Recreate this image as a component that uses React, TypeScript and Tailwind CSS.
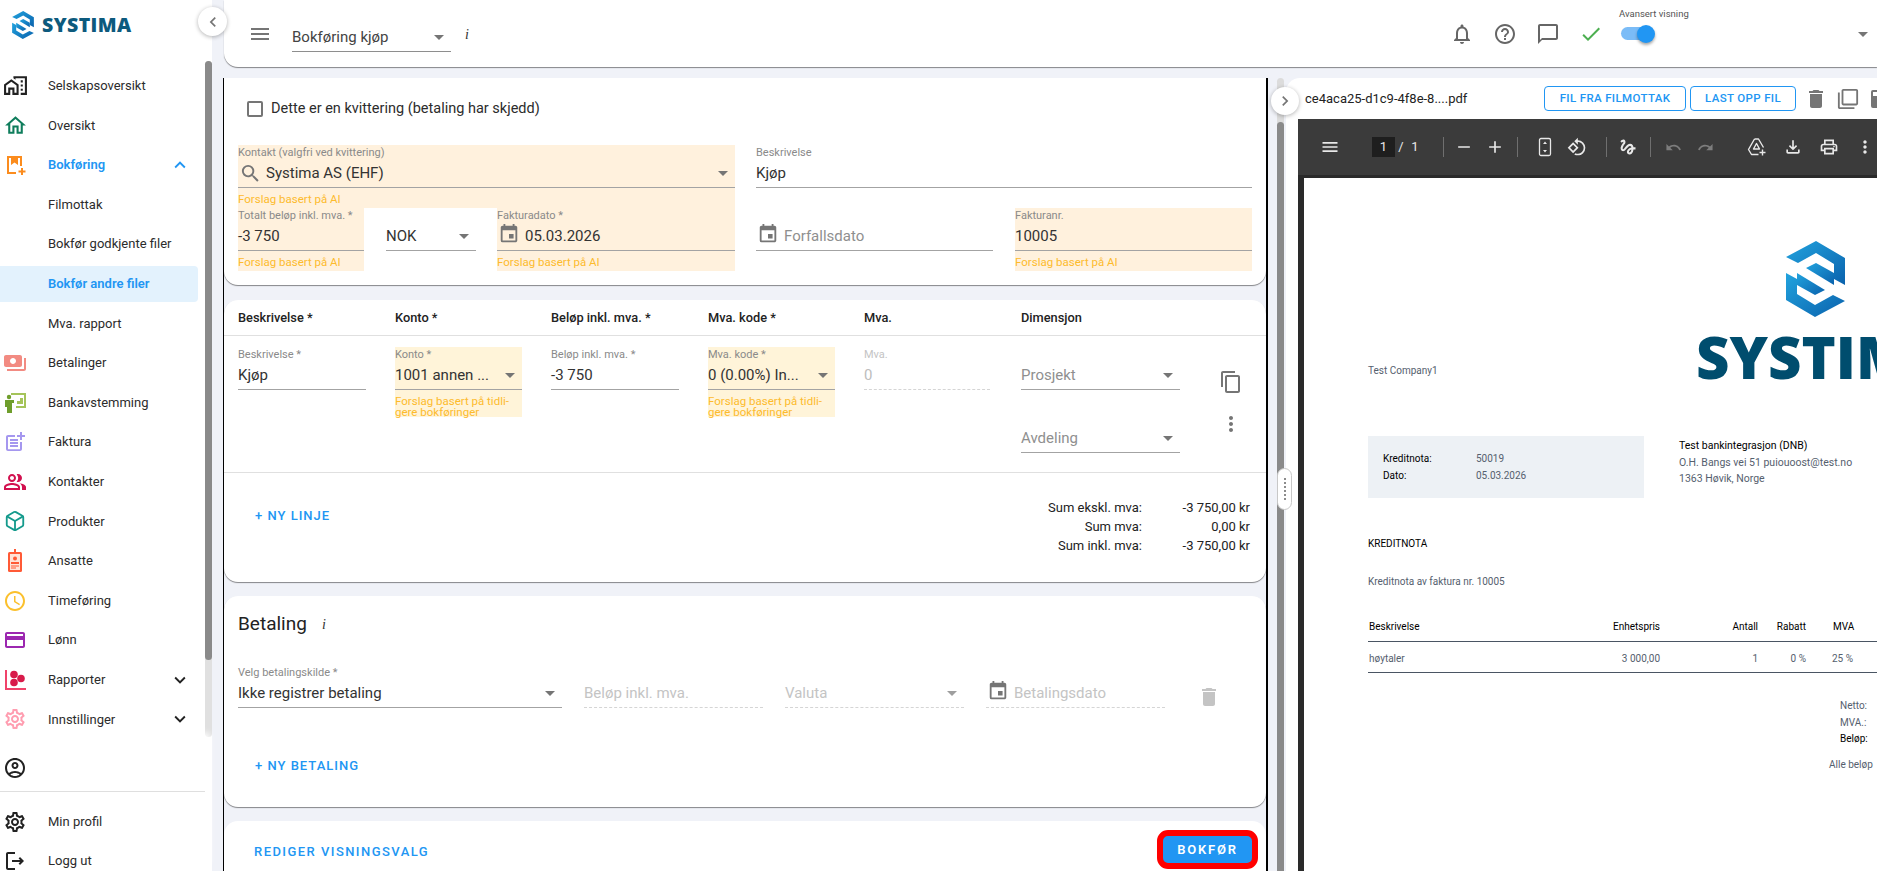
import type { ReactNode } from "react";
import { Box } from "lucide-react";
import {
  MdAdd,
  MdArrowDropDown,
  MdCheck,
  MdChevronLeft,
  MdChevronRight,
  MdContentCopy,
  MdDelete,
  MdEvent,
  MdExpandLess,
  MdExpandMore,
  MdFilterNone,
  MdHelpOutline,
  MdMenu,
  MdMoreVert,
  MdOutlineAccessTime,
  MdOutlineAccountCircle,
  MdOutlineChatBubbleOutline,
  MdOutlineFileDownload,
  MdOutlineGesture,
  MdOutlineHome,
  MdOutlineHomeWork,
  MdOutlineLogout,
  MdOutlineNotifications,
  MdOutlinePayment,
  MdOutlinePeopleAlt,
  MdOutlinePostAdd,
  MdOutlinePrint,
  MdOutlineRotate90DegreesCcw,
  MdOutlineSettings,
  MdPayments,
  MdRedo,
  MdRemove,
  MdSave,
  MdSearch,
  MdUndo,
} from "react-icons/md";

const AI_HINT = "Forslag basert på AI";

function LogoMark({ className }: { className: string }) {
  return (
    <svg viewBox="0 0 59 76" className={className}>
      <defs>
        <linearGradient id="logoFill" x1="0" y1="0" x2="1" y2="1">
          <stop offset="0" stopColor="#22a3de" />
          <stop offset="1" stopColor="#0a62ad" />
        </linearGradient>
      </defs>
      <path d="M0 16 L30 0 L59 17 V44 L48 38 V23 L30 12 L12 22 Z" fill="url(#logoFill)" />
      <path d="M20 27 L30 22 L48 32 V44 Z" fill="url(#logoFill)" />
      <path d="M59 60 L29 76 L0 59 V32 L11 38 V53 L29 64 L47 54 Z" fill="url(#logoFill)" />
      <path d="M39 49 L29 54 L11 44 V32 Z" fill="url(#logoFill)" />
    </svg>
  );
}

function BookingIcon() {
  return (
    <svg viewBox="0 0 24 24" className="w-[24px] h-[24px]" fill="none">
      <path d="M18 13V4H5v16h8" stroke="#fb8c1e" strokeWidth="2" />
      <path d="M8 4h7v8l-3.500-2.500L8 12z" fill="#fb8c1e" />
      <path d="M19 15v7M15.500 18.500h7" stroke="#fb8c1e" strokeWidth="2" />
    </svg>
  );
}

function BankIcon() {
  return (
    <svg viewBox="0 0 24 24" className="w-[24px] h-[24px]" fill="none">
      <path d="M8 3h14v13H13" stroke="#a5c45a" strokeWidth="2" />
      <path d="M14 13h6V7h-3v3h-3z" fill="#a5c45a" />
      <circle cx="6" cy="6" r="2.200" fill="#6f9e2c" />
      <path d="M2 9h9v3H9v10H4v-6H2z" fill="#6f9e2c" />
    </svg>
  );
}

function BadgeIcon() {
  return (
    <svg viewBox="0 0 24 24" className="w-[24px] h-[24px]">
      <path d="M11 0h2v4h-2z" fill="#ff5a36" />
      <rect x="5" y="3" width="14" height="20" rx="1.500" fill="#ff5a36" />
      <rect x="7" y="5" width="10" height="16" fill="#ffe3d8" />
      <circle cx="12" cy="9.500" r="2" fill="#ff5a36" />
      <path d="M8 13h8v2H8zM8 16.500h8v1H8zM8 18.500h5v1H8z" fill="#ff5a36" />
    </svg>
  );
}

function ReportIcon() {
  return (
    <svg viewBox="0 0 24 24" className="w-[24px] h-[24px]" fill="none">
      <path d="M3 2v19h20" stroke="#f0436a" strokeWidth="2" />
      <circle cx="11" cy="6.500" r="3.800" fill="#d81b4a" />
      <circle cx="18" cy="10.500" r="3.800" fill="#d81b4a" />
      <circle cx="11" cy="14.500" r="3.800" fill="#d81b4a" />
    </svg>
  );
}

function FitPageIcon() {
  return (
    <svg viewBox="0 0 20 20" className="w-[20px] h-[20px]" fill="none" stroke="#e8e8e8" strokeWidth="1.300">
      <rect x="4.500" y="1.500" width="11" height="17" rx="1.500" />
      <path d="M10 4.500 8 7h4zM10 15.500 8 13h4z" fill="#e8e8e8" stroke="none" />
    </svg>
  );
}

function DriveAddIcon() {
  return (
    <svg viewBox="0 0 20 20" className="w-[20px] h-[20px]" fill="none" stroke="#e8e8e8" strokeWidth="1.400" strokeLinejoin="round">
      <path d="M7.500 2h4l5 8.500M7.500 2 1.500 12.500l3 5h7" />
      <path d="M9.500 6.500 12.500 12h-6z" />
      <path d="M15.500 12.500v6M12.500 15.500h6" />
    </svg>
  );
}

const navItems: { label: string; icon?: ReactNode; open?: boolean; closed?: boolean; sub?: boolean; active?: boolean; blue?: boolean }[] = [
  { label: "Selskapsoversikt", icon: <MdOutlineHomeWork size={25} color="#222" /> },
  { label: "Oversikt", icon: <MdOutlineHome size={25} color="#0f7d5c" /> },
  { label: "Bokføring", icon: <BookingIcon />, open: true, blue: true },
  { label: "Filmottak", sub: true },
  { label: "Bokfør godkjente filer", sub: true },
  { label: "Bokfør andre filer", sub: true, active: true, blue: true },
  { label: "Mva. rapport", sub: true },
  { label: "Betalinger", icon: <MdPayments size={24} color="#f28b82" /> },
  { label: "Bankavstemming", icon: <BankIcon /> },
  { label: "Faktura", icon: <MdOutlinePostAdd size={24} color="#a597ef" /> },
  { label: "Kontakter", icon: <MdOutlinePeopleAlt size={24} color="#d2114f" /> },
  { label: "Produkter", icon: <Box size={22} color="#149a8c" strokeWidth={2} /> },
  { label: "Ansatte", icon: <BadgeIcon /> },
  { label: "Timeføring", icon: <MdOutlineAccessTime size={24} color="#fbc02d" /> },
  { label: "Lønn", icon: <MdOutlinePayment size={24} color="#9c27b0" /> },
  { label: "Rapporter", icon: <ReportIcon />, closed: true },
  { label: "Innstillinger", icon: <MdOutlineSettings size={24} color="#ff9db0" />, closed: true },
];

function NavRow({ label, icon, open, closed, active, blue }: (typeof navItems)[number]) {
  return (
    <div className="h-[39.6px] flex items-center">
      <div className={`w-[198px] h-[36px] flex items-center rounded-r-[4px] ${active ? "bg-[#e3f2fd]" : ""}`}>
        <span className="w-[30px] flex justify-center shrink-0">{icon}</span>
        <span className={`ml-[18px] text-[13px] whitespace-nowrap ${blue ? "text-[#2196f3] font-semibold" : "text-[#2c2c2c]"}`}>{label}</span>
        {open && <MdExpandLess size={22} color="#2196f3" className="ml-auto mr-[7px]" />}
        {closed && <MdExpandMore size={22} color="#222" className="ml-auto mr-[7px]" />}
      </div>
    </div>
  );
}

function Sidebar() {
  return (
    <aside className="w-[212px] h-full shrink-0 bg-white flex flex-col">
      <div className="h-[61px] shrink-0 pl-[12px] pt-[11px] flex items-start gap-[8px]">
        <LogoMark className="w-[22px] h-[28px]" />
        <span className="text-[19.500px] leading-[28px] font-extrabold tracking-[0.4px] text-[#0d5a7d] font-['Open_Sans',sans-serif]">SYSTIMA</span>
      </div>
      <div className="flex-1 min-h-0 flex">
        <nav className="w-[205px] pt-[5px] overflow-hidden">
          {navItems.map((item) => (
            <NavRow key={item.label} {...item} />
          ))}
        </nav>
        <div className="w-[7px] bg-[#e0e0e0] rounded-full">
          <div className="h-[599px] bg-[#8a8a8a] rounded-full" />
        </div>
      </div>
      <div className="h-[134px] shrink-0 bg-white shadow-[0_-6px_6px_-2px_rgba(255,255,255,0.9)]">
        <div className="h-[54px] pt-[8px] flex items-center pl-[3px]">
          <MdOutlineAccountCircle size={24} color="#222" />
        </div>
        <div className="w-[205px] border-t border-[#dfdfdf]" />
        <div className="pt-[10px]">
          <div className="h-[39px] flex items-center">
            <span className="w-[30px] flex justify-center"><MdOutlineSettings size={24} color="#222" /></span>
            <span className="ml-[18px] text-[13px] text-[#2c2c2c]">Min profil</span>
          </div>
          <div className="h-[39px] flex items-center">
            <span className="w-[30px] flex justify-center"><MdOutlineLogout size={24} color="#222" /></span>
            <span className="ml-[18px] text-[13px] text-[#2c2c2c]">Logg ut</span>
          </div>
        </div>
      </div>
    </aside>
  );
}

function TopBar() {
  return (
    <header className="ml-[12px] h-[67px] shrink-0 bg-white rounded-bl-[14px] shadow-[0_1px_1px_rgba(0,0,0,0.45)] flex items-center">
      <MdMenu size={24} color="#757575" className="ml-[24px]" />
      <div className="ml-[20px] w-[159px] h-[29px] mt-[8px] border-b border-[#8e8e8e] flex items-center justify-between">
        <span className="text-[15px] text-[#444]">Bokføring kjøp</span>
        <MdArrowDropDown size={24} color="#757575" />
      </div>
      <span className="ml-[14px] mt-[1px] text-[14px] italic font-['Liberation_Serif',serif] text-[#333]">i</span>
      <div className="ml-auto h-full flex items-center">
        <div className="flex items-center gap-[19px] mr-[16px]">
          <MdOutlineNotifications size={24} color="#666" />
          <MdHelpOutline size={24} color="#666" />
          <MdOutlineChatBubbleOutline size={24} color="#666" />
          <MdCheck size={24} color="#4caf50" />
        </div>
        <div className="w-[68px] h-full pt-[8px]">
          <div className="h-[12px] text-[9.500px] leading-[12px] whitespace-nowrap text-[#555]">Avansert visning</div>
          <div className="relative mt-[7px] ml-[2px] w-[33px] h-[13px] rounded-full bg-[#7bbcf7]">
            <span className="absolute right-[-1px] top-[-2.500px] w-[18px] h-[18px] rounded-full bg-[#2196f3] shadow-[0_2px_3px_rgba(0,0,0,0.35)]" />
          </div>
        </div>
        <MdArrowDropDown size={24} color="#757575" className="ml-[164px] mr-[2px]" />
      </div>
    </header>
  );
}

type FieldProps = {
  label?: string;
  value?: string;
  placeholder?: string;
  select?: boolean;
  hint?: string;
  tint?: string;
  icon?: ReactNode;
  disabled?: boolean;
  className?: string;
};

function Field({ label, value, placeholder, select, hint, tint, icon, disabled, className }: FieldProps) {
  return (
    <div className={`${tint ?? ""} ${className ?? ""}`}>
      <div className={`h-[14px] text-[11px] leading-[16px] whitespace-nowrap ${disabled ? "text-[#c4c4c4]" : "text-[#8a8a8a]"}`}>{label}</div>
      <div className={`h-[29px] flex items-center ${disabled ? "border-b border-dashed border-[#d5d5d5]" : "border-b border-[#a3a3a3]"}`}>
        {icon}
        <span className={`flex-1 min-w-0 whitespace-nowrap text-[15px] ${value ? (disabled ? "text-[#bdbdbd]" : "text-[#333]") : disabled ? "text-[#c4c4c4]" : "text-[#8f8f8f]"}`}>
          {value ?? placeholder}
        </span>
        {select && <MdArrowDropDown size={24} color={disabled ? "#9e9e9e" : "#757575"} className="shrink-0" />}
      </div>
      {hint && <div className="pt-[6px] text-[11.500px] leading-[11px] text-[#fdbb2d]">{hint}</div>}
    </div>
  );
}

const cardShadow = "shadow-[0_1px_1px_rgba(0,0,0,0.45)]";
const calendar = <MdEvent size={22} color="#757575" className="mr-[5px] ml-[1px] mb-[4px] shrink-0" />;

function ReceiptCard() {
  return (
    <section className={`bg-white rounded-b-[14px] ${cardShadow} h-[207px] shrink-0 pl-[14px] pr-[15px]`}>
      <label className="ml-[9px] pt-[23px] flex items-center gap-[8px]">
        <span className="w-[16px] h-[16px] rounded-[2px] border-2 border-[#757575]" />
        <span className="text-[14.500px] leading-[16px] text-[#2c2c2c]">Dette er en kvittering (betaling har skjedd)</span>
      </label>
      <div className="mt-[28px] grid grid-cols-[497px_496px] gap-x-[21px]">
        <Field
          label="Kontakt (valgfri ved kvittering)"
          value="Systima AS (EHF)"
          select
          hint={AI_HINT}
          tint="bg-[#fff1dd] h-[63px]"
          icon={<MdSearch size={23} color="#757575" className="mr-[4px] ml-[1px] shrink-0" />}
        />
        <Field label="Beskrivelse" value="Kjøp" />
      </div>
      <div className="grid grid-cols-[126px_91px_238px_237px_238px] gap-x-[21px]">
        <Field label="Totalt beløp inkl. mva. *" value="-3 750" hint={AI_HINT} tint="bg-[#fff1dd] h-[63px]" />
        <Field value="NOK" select className="ml-[1px]" />
        <Field label="Fakturadato *" value="05.03.2026" hint={AI_HINT} tint="bg-[#fff1dd] h-[63px]" icon={calendar} />
        <Field placeholder="Forfallsdato" icon={calendar} />
        <Field label="Fakturanr." value="10005" hint={AI_HINT} tint="bg-[#fff1dd] h-[63px]" className="ml-[1px]" />
      </div>
    </section>
  );
}

const lineGrid = "grid grid-cols-[128px_127px_128px_127px_128px_159px_44px] gap-x-[29px] pl-[14px]";
const TIP = "Forslag basert på tidli-gere bokføringer";

function LinesCard() {
  return (
    <section className={`mt-[15px] bg-white rounded-[14px] ${cardShadow} h-[282px] shrink-0`}>
      <div className={`${lineGrid} h-[36px] items-center border-b border-[#e0e0e0] text-[12.800px] font-medium text-[#222]`}>
        <span>Beskrivelse *</span>
        <span>Konto *</span>
        <span>Beløp inkl. mva. *</span>
        <span>Mva. kode *</span>
        <span>Mva.</span>
        <span>Dimensjon</span>
        <span />
      </div>
      <div className={`${lineGrid} h-[137px] pt-[11px] border-b border-[#e0e0e0]`}>
        <Field label="Beskrivelse *" value="Kjøp" />
        <Field label="Konto *" value="1001 annen ..." select hint={TIP} tint="bg-[#fff4d9] h-[70px]" />
        <Field label="Beløp inkl. mva. *" value="-3 750" />
        <Field label="Mva. kode *" value="0 (0.00%) In..." select hint={TIP} tint="bg-[#fff4d9] h-[70px]" />
        <Field label="Mva." value="0" disabled className="w-[126px]" />
        <div>
          <Field placeholder="Prosjekt" select />
          <Field placeholder="Avdeling" select className="mt-[20px]" />
        </div>
        <div className="flex flex-col items-center pt-[23px] text-[#757575]">
          <MdContentCopy size={24} />
          <MdMoreVert size={24} className="mt-[18px]" />
        </div>
      </div>
      <div className="flex justify-between pl-[31px] pr-[16px] pt-[25px]">
        <span className="h-[36px] flex items-center text-[13px] font-medium tracking-[1px] text-[#2196f3]">+ NY LINJE</span>
        <div className="grid grid-cols-[auto_108px] text-[13px] leading-[19px] text-right text-[#222]">
          <span>Sum ekskl. mva:</span>
          <span>-3 750,00 kr</span>
          <span>Sum mva:</span>
          <span>0,00 kr</span>
          <span>Sum inkl. mva:</span>
          <span>-3 750,00 kr</span>
        </div>
      </div>
    </section>
  );
}

function PaymentCard() {
  return (
    <section className={`mt-[14px] bg-white rounded-[14px] ${cardShadow} h-[211px] shrink-0 pl-[14px]`}>
      <div className="pt-[14px] h-[42px] flex items-center gap-[15px]">
        <span className="text-[19px] text-[#222]">Betaling</span>
        <span className="text-[14px] italic font-['Liberation_Serif',serif] text-[#333]">i</span>
      </div>
      <div className="mt-[27px] grid grid-cols-[324px_179px_179px_179px_24px] gap-x-[22px]">
        <Field label="Velg betalingskilde *" value="Ikke registrer betaling" select />
        <Field placeholder="Beløp inkl. mva." disabled />
        <Field placeholder="Valuta" select disabled />
        <Field placeholder="Betalingsdato" disabled icon={calendar} />
        <MdDelete size={24} color="#c4c4c4" className="mt-[20px] ml-[10px]" />
      </div>
      <div className="mt-[39px] ml-[17px] h-[36px] flex items-center text-[13px] font-medium tracking-[1px] text-[#2196f3]">+ NY BETALING</div>
    </section>
  );
}

function ActionCard() {
  return (
    <section className="mt-[14px] flex-1 bg-white rounded-t-[14px] flex items-start justify-between pl-[30px] pr-[8px] pt-[9px]">
      <span className="h-[44px] flex items-center text-[13px] font-medium tracking-[1.450px] text-[#2196f3]">REDIGER VISNINGSVALG</span>
      <button className="w-[101px] h-[39px] rounded-[11px] border-[6px] border-[#ff0000] bg-[#2196f3] text-[13px] font-semibold tracking-[1.800px] text-white">BOKFØR</button>
    </section>
  );
}

function ToolbarSep({ className }: { className: string }) {
  return <span className={`w-px h-[20px] bg-[#6f6f6f] shrink-0 ${className}`} />;
}

function PdfToolbar() {
  return (
    <div className="h-[56px] shrink-0 bg-[#3b3b3b] flex items-center text-[#e8e8e8]">
      <MdMenu size={20} className="ml-[22px] shrink-0" />
      <span className="ml-[32px] w-[23px] h-[20px] bg-[#1e1e1e] text-[13px] leading-[20px] text-center shrink-0">1</span>
      <span className="w-[12px] text-[13px] text-center shrink-0">/</span>
      <span className="ml-[2px] w-[12px] text-[13px] text-center shrink-0">1</span>
      <ToolbarSep className="ml-[22px]" />
      <MdRemove size={20} className="ml-[10px] shrink-0" />
      <MdAdd size={20} className="ml-[11px] shrink-0" />
      <ToolbarSep className="ml-[12px]" />
      <span className="ml-[17px] shrink-0"><FitPageIcon /></span>
      <MdOutlineRotate90DegreesCcw size={20} className="ml-[12px] shrink-0" />
      <ToolbarSep className="ml-[19px]" />
      <MdOutlineGesture size={20} className="ml-[11px] shrink-0" />
      <ToolbarSep className="ml-[12px]" />
      <span className="ml-[12px] w-[20px] flex justify-center shrink-0"><MdUndo size={17} color="#7d7d7d" /></span>
      <span className="ml-[12px] w-[20px] flex justify-center shrink-0"><MdRedo size={17} color="#7d7d7d" /></span>
      <span className="ml-[32px] shrink-0"><DriveAddIcon /></span>
      <MdOutlineFileDownload size={20} className="ml-[16px] shrink-0" />
      <MdOutlinePrint size={20} className="ml-[16px] shrink-0" />
      <MdMoreVert size={20} className="ml-[16px] shrink-0" />
    </div>
  );
}

function PdfPage() {
  return (
    <div className="ml-[6px] mt-[3px] pt-px flex-1 min-h-0 bg-white overflow-hidden pl-[64px] font-['Roboto',sans-serif] text-[10px] leading-[14px] text-[#55606e]">
      <div className="h-[207px] flex">
        <div className="w-[330px] shrink-0 pt-[185px]">Test Company1</div>
        <div className="shrink-0 pt-[62px]">
          <LogoMark className="ml-[88px] w-[59px] h-[76px]" />
          <div className="mt-[9px] -ml-[2px] text-[58px] leading-[62px] font-extrabold text-[#004d6e] font-['Open_Sans',sans-serif] whitespace-nowrap">SYSTIMA</div>
        </div>
      </div>
      <div className="mt-[50px] flex">
        <div className="w-[276px] h-[62px] shrink-0 bg-[#edf1f5] pt-[16px] pl-[15px] grid grid-cols-[93px_1fr] auto-rows-[17px]">
          <span className="text-black">Kreditnota:</span>
          <span>50019</span>
          <span className="text-black">Dato:</span>
          <span>05.03.2026</span>
        </div>
        <div className="ml-[35px] pt-[2px] whitespace-nowrap text-[10.500px] leading-[16.500px]">
          <div className="text-black">Test bankintegrasjon (DNB)</div>
          <div>O.H. Bangs vei 51 puiouoost@test.no</div>
          <div>1363 Høvik, Norge</div>
        </div>
      </div>
      <div className="mt-[39px] text-black">KREDITNOTA</div>
      <div className="mt-[24px]">Kreditnota av faktura nr. 10005</div>
      <div className="mt-[31px] w-[600px] h-[22px] border-b border-[#4a5563] flex text-black">
        <span className="w-[292px] pl-px">
          <span className="float-left">Beskrivelse</span>
          <span className="float-right">Enhetspris</span>
        </span>
        <span className="w-[98px] text-right">Antall</span>
        <span className="w-[48px] text-right">Rabatt</span>
        <span className="ml-[27px]">MVA</span>
      </div>
      <div className="w-[600px] h-[31px] pt-[10px] border-b border-[#4a5563] flex">
        <span className="w-[292px] pl-px">
          <span className="float-left">høytaler</span>
          <span className="float-right">3 000,00</span>
        </span>
        <span className="w-[98px] text-right">1</span>
        <span className="w-[48px] text-right">0 %</span>
        <span className="ml-[26px]">25 %</span>
      </div>
      <div className="mt-[25px] pl-[472px] whitespace-nowrap leading-[16.500px]">
        <div>Netto:</div>
        <div>MVA.:</div>
        <div className="text-black">Beløp:</div>
      </div>
      <div className="mt-[10px] pl-[461px] whitespace-nowrap">Alle beløp</div>
    </div>
  );
}

function FilePanel() {
  return (
    <div className="flex-1 min-w-0 ml-[2px] bg-white rounded-tl-[14px] overflow-hidden flex flex-col">
      <div className="h-[41px] shrink-0 flex items-center overflow-hidden">
        <span className="pl-[19px] w-[258px] shrink-0 text-[13px] text-[#222] whitespace-nowrap">ce4aca25-d1c9-4f8e-8....pdf</span>
        <button className="w-[142px] h-[25px] shrink-0 rounded-[4px] border border-[#2196f3] text-[11.500px] font-medium tracking-[0.350px] text-[#2196f3]">FIL FRA FILMOTTAK</button>
        <button className="ml-[4px] w-[106px] h-[25px] shrink-0 rounded-[4px] border border-[#2196f3] text-[11.500px] font-medium tracking-[0.350px] text-[#2196f3]">LAST OPP FIL</button>
        <MdDelete size={24} color="#757575" className="ml-[8px] shrink-0" />
        <MdFilterNone size={22} color="#757575" className="ml-[9px] shrink-0" />
        <MdSave size={24} color="#757575" className="ml-[9px] shrink-0" />
      </div>
      <div className="ml-[12px] flex-1 min-h-0 bg-[#2a2a2a] flex flex-col">
        <PdfToolbar />
        <PdfPage />
      </div>
    </div>
  );
}

export default function App() {
  return (
    <div className="relative w-[1877px] h-[871px] overflow-hidden bg-[#f0f2f8] flex font-['Roboto',sans-serif]">
      <Sidebar />
      <main className="flex-1 min-w-0 flex flex-col">
        <TopBar />
        <div className="mt-[11px] flex-1 min-h-0 flex">
          <div className="ml-[11px] w-[1045px] shrink-0 border-l border-r-2 border-black flex flex-col overflow-hidden">
            <ReceiptCard />
            <LinesCard />
            <PaymentCard />
            <ActionCard />
          </div>
          <div className="ml-[9px] w-[7px] shrink-0 bg-[#dcdcdc] rounded-full">
            <div className="mt-[44px] h-full bg-[#8a8a8a] rounded-full" />
          </div>
          <FilePanel />
        </div>
      </main>

      {/* floating handles */}
      <button className="absolute left-[198px] top-[7px] w-[29px] h-[29px] rounded-full bg-white shadow-[0_1px_4px_rgba(0,0,0,0.3)] flex items-center justify-center">
        <MdChevronLeft size={20} color="#757575" />
      </button>
      <button className="absolute left-[1271px] top-[87px] w-[28px] h-[28px] rounded-full bg-white shadow-[0_1px_4px_rgba(0,0,0,0.3)] flex items-center justify-center">
        <MdChevronRight size={20} color="#757575" />
      </button>
      <div className="absolute left-[1277px] top-[468px] w-[15px] h-[42px] rounded-full bg-white border border-[#c8c8c8] flex flex-col items-center justify-center gap-[2px]">
        {[0, 1, 2, 3, 4, 5].map((dot) => (
          <span key={dot} className="w-[2px] h-[2px] rounded-full bg-[#666]" />
        ))}
      </div>
    </div>
  );
}
